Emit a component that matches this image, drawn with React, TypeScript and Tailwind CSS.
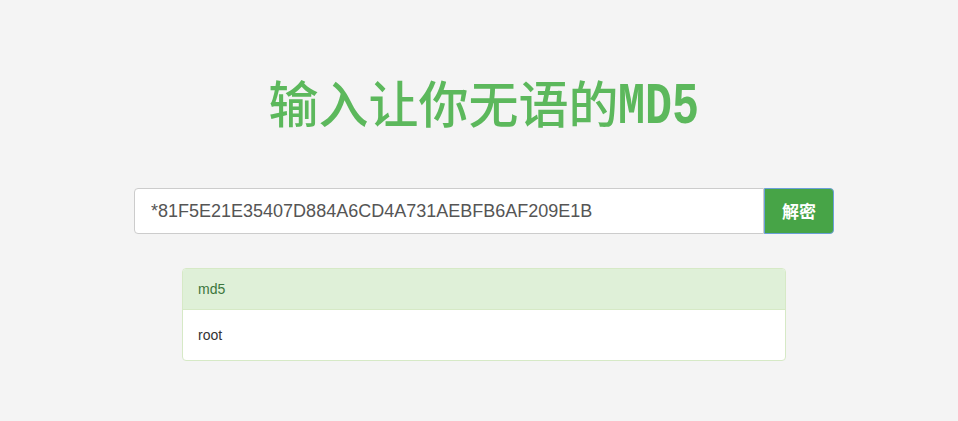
import React, { useState } from "react";

export default function App() {
  const [hash, setHash] = useState("*81F5E21E35407D884A6CD4A731AEBFB6AF209E1B");

  return (
    <div className="min-h-[421px] w-full bg-[#f4f4f4] pl-[10px] [font-family:'Liberation_Sans',Arial,sans-serif]">
      <div className="mx-auto flex w-[700px] flex-col items-center pt-[68px]">
        {/* title */}
        <h1 className="h-[66px] whitespace-nowrap text-center text-[50px] leading-[66px] font-medium text-[#5cb85c] [font-family:'Noto_Sans_CJK_SC',sans-serif]">
          输入让你无语的
          <span className="mr-[-27px] inline-block origin-left scale-x-75 text-[60px] font-bold [font-family:'Liberation_Mono',monospace]">
            MD5
          </span>
        </h1>

        {/* search */}
        <div className="mt-[54px] flex h-[46px] w-[700px]">
          <input
            value={hash}
            onChange={(e) => setHash(e.target.value)}
            className="h-full flex-1 rounded-l-[4px] border border-[#ccc] bg-white px-[16px] text-[18px] text-[#555] outline-none [font-family:'Liberation_Sans',Arial,sans-serif]"
          />
          <button className="h-full w-[70px] rounded-r-[4px] border border-[#6a9fd8] bg-[#47a447] text-[17px] font-bold text-white [font-family:'Noto_Sans_CJK_SC',sans-serif]">
            解密
          </button>
        </div>

        {/* result */}
        <div className="mt-[34px] w-[604px] overflow-hidden rounded-[4px] border border-[#d6e9c6] bg-white text-[14px]">
          <div className="h-[41px] border-b border-[#d6e9c6] bg-[#dff0d8] px-[15px] leading-[40px] text-[#3c763d]">
            md5
          </div>
          <div className="h-[50px] px-[15px] leading-[50px] text-[#333]">root</div>
        </div>
      </div>
    </div>
  );
}
